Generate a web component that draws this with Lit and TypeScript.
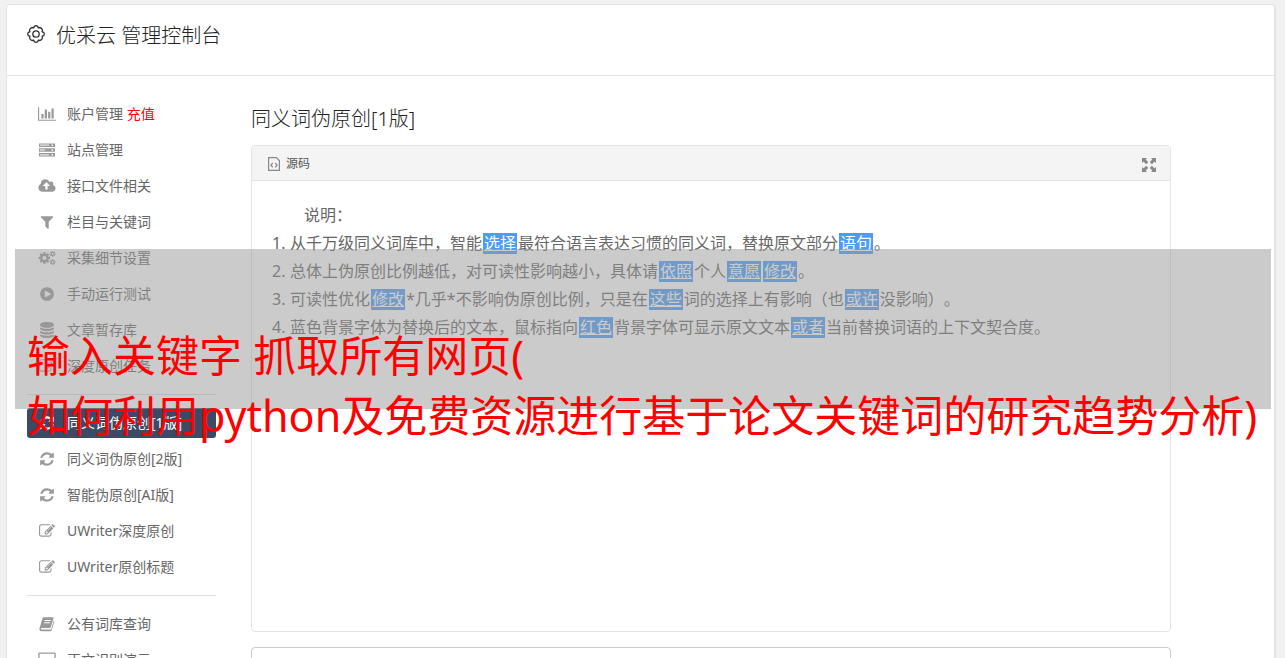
import { LitElement, html, css, svg, nothing } from "lit";
import { customElement } from "lit/decorators.js";
import { classMap } from "lit/directives/class-map.js";

const cog = (cx: number, cy: number, r: number, hole: number) => svg`
  <circle cx=${cx} cy=${cy} r=${(r + hole) / 2} fill="none" stroke="currentColor" stroke-width=${r - hole}></circle>
  ${[0, 45, 90, 135].map(
    (a) => svg`<rect x=${cx - r * 0.28} y=${cy - r * 1.35} width=${r * 0.56} height=${r * 0.5} transform="rotate(${a} ${cx} ${cy})"></rect>
    <rect x=${cx - r * 0.28} y=${cy + r * 0.85} width=${r * 0.56} height=${r * 0.5} transform="rotate(${a} ${cx} ${cy})"></rect>`
  )}`;

const ICONS: Record<string, { box: string; w: number; h: number; body: unknown }> = {
  chart: {
    box: "0 0 2048 1792", w: 18, h: 16,
    body: svg`<path d="M640 896v512h-256v-512h256zm384-512v1024h-256v-1024h256zm1024 1152v128h-2048v-1536h128v1408h1920zm-640-896v768h-256v-768h256zm384-384v1152h-256v-1152h256z"/>`,
  },
  server: {
    box: "0 0 18 16", w: 18, h: 16,
    body: svg`<path fill-rule="evenodd" d="M1 1.5h16v3.6H1zM2 2.6v1.4h9V2.6zM13.6 2.6v1.4h1.4V2.6zM1 6.2h16v3.6H1zM2 7.3v1.4h5V7.3zM13.6 7.3v1.4h1.4V7.3zM1 10.9h16v3.6H1zM2 12v1.4h9V12zM13.6 12v1.4h1.4V12z"/><path opacity=".45" d="M2 2.6h9v1.4H2zM2 7.3h5v1.4H2zM2 12h9v1.4H2z"/>`,
  },
  upload: {
    box: "0 0 1920 1792", w: 18, h: 16,
    body: svg`<path fill-rule="evenodd" d="M1280 864q0-14-9-23l-352-352q-9-9-23-9t-23 9l-351 351q-10 12-10 24 0 14 9 23t23 9h224v352q0 13 9.500 22.500t22.500 9.500h192q13 0 22.500-9.500t9.500-22.500v-352h224q13 0 22.500-9.500t9.500-22.500zm640 288q0 159-112.500 271.500t-271.500 112.500h-1088q-185 0-316.500-131.500t-131.500-316.500q0-130 70-240t188-165q-2-30-2-43 0-212 150-362t362-150q156 0 285.500 87t188.500 231q71-62 166-62 106 0 181 75t75 181q0 76-41 138 130 31 213.500 135.500t83.500 238.500z"/>`,
  },
  filter: {
    box: "0 0 1792 1792", w: 16, h: 16,
    body: svg`<path d="M1595 295q17 41-14 70l-493 493v742q0 42-39 59-13 5-25 5-27 0-45-19l-256-256q-19-19-19-45v-486l-493-493q-31-29-14-70 17-39 59-39h1280q42 0 59 39z"/>`,
  },
  cogs: {
    box: "0 0 18 16", w: 18, h: 16,
    body: svg`${cog(6.4, 8, 4.3, 2)}${cog(14.6, 3.9, 2.1, 1)}${cog(14.6, 12.2, 2.1, 1)}`,
  },
  play: {
    box: "0 0 1792 1792", w: 16, h: 16,
    body: svg`<path fill-rule="evenodd" d="M896 128q209 0 385.500 103t279.500 279.500 103 385.500-103 385.500-279.500 279.500-385.500 103-385.500-103-279.500-279.500-103-385.500 103-385.500 279.500-279.500 385.500-103zm384 823q32-18 32-55t-32-55l-544-320q-31-19-64-1-32 19-32 56v640q0 37 32 56 16 8 32 8 17 0 32-9z"/>`,
  },
  database: {
    box: "0 0 1792 1792", w: 16, h: 16,
    body: svg`<path d="M896 768q237 0 443-43t325-127v170q0 69-103 128t-280 93.500-385 34.500-385-34.500-280-93.500-103-128v-170q119 84 325 127t443 43zm0 768q237 0 443-43t325-127v170q0 69-103 128t-280 93.500-385 34.500-385-34.500-280-93.500-103-128v-170q119 84 325 127t443 43zm0-384q237 0 443-43t325-127v170q0 69-103 128t-280 93.500-385 34.500-385-34.500-280-93.500-103-128v-170q119 84 325 127t443 43zm0-1152q208 0 385 34.500t280 93.500 103 128v128q0 69-103 128t-280 93.500-385 34.500-385-34.500-280-93.500-103-128v-128q0-69 103-128t280-93.500 385-34.500z"/>`,
  },
  edit: {
    box: "0 0 1792 1792", w: 16, h: 16,
    body: svg`<path d="M888 1184l116-116-152-152-116 116v56h96v96h56zm440-720q-16-16-33 1l-350 350q-17 17-1 33t33-1l350-350q17-17 1-33zm80 594v190q0 119-84.500 203.500t-203.500 84.500h-832q-119 0-203.500-84.500t-84.500-203.500v-832q0-119 84.500-203.500t203.500-84.500h832q63 0 117 25 15 7 18 23 3 17-9 29l-49 49q-14 14-32 8-23-6-45-6h-832q-66 0-113 47t-47 113v832q0 66 47 113t113 47h832q66 0 113-47t47-113v-126q0-13 9-22l64-64q15-15 35-7t20 29zm-96-738l288 288-672 672h-288v-288zm444 132l-92 92-288-288 92-92q28-28 68-28t68 28l152 152q28 28 28 68t-28 68z"/>`,
  },
  refresh: {
    box: "0 0 1792 1792", w: 16, h: 16,
    body: svg`<path d="M1639 1056q0 5-1 7-64 268-268 434.500t-478 166.500q-146 0-282.500-55t-243.500-157l-129 129q-19 19-45 19t-45-19-19-45v-448q0-26 19-45t45-19h448q26 0 45 19t19 45-19 45l-137 137q71 66 161 102t187 36q134 0 250-65t186-179q11-17 53-117 8-23 30-23h192q13 0 22.500 9.500t9.500 22.500zm25-800v448q0 26-19 45t-45 19h-448q-26 0-45-19t-19-45 19-45l138-138q-148-137-349-137-134 0-250 65t-186 179q-11 17-53 117-8 23-30 23h-199q-13 0-22.500-9.500t-9.500-22.500v-7q65-268 270-434.500t480-166.500q146 0 284 55.500t245 156.500l130-129q19-19 45-19t45 19 19 45z"/>`,
  },
  book: {
    box: "0 0 16 16", w: 16, h: 16,
    body: svg`<path fill-rule="evenodd" d="M5.200 1.200h8.600q1 0 .7 1.100l-2.700 8.700q-.3 1-1.300 1H2.800q-1 0-1 .8t1 .8h8.400q.8 0 1-.7l2.500-8.200q.8.300.5 1.300l-2.500 8q-.4 1.300-1.700 1.300H2.700Q.9 15.300.5 13.700q-.3-.9.1-1.800L3.400 2.600q.4-1.400 1.800-1.400zM5.800 4l-.3 1h6.200l.3-1zM5.100 6.200l-.3 1H11l.3-1z"/>`,
  },
  desktop: {
    box: "0 0 18 16", w: 18, h: 16,
    body: svg`<path fill-rule="evenodd" d="M1.500.5h15q1.200 0 1.200 1.200v10q0 1.200-1.200 1.200H11l.8 2.600H6.200L7 12.900H1.500q-1.200 0-1.200-1.200v-10Q.3.500 1.500.5zM1.600 1.800v8.400h14.800V1.800z"/>`,
  },
  gear: {
    box: "0 0 18 18", w: 18, h: 18,
    body: svg`<g fill="none" stroke="currentColor" stroke-width="1.300"><circle cx="9" cy="9" r="3.200"/><path stroke-linejoin="round" d="M7.300 1.300Q9 .200 10.700 1.300L11.200 2.900L12.900 2.500Q14.900 2.900 15.500 5.100L15.100 6.800L16.700 7.300Q17.800 9 16.700 10.700L15.100 11.200L15.500 12.900Q15.100 14.900 12.900 15.500L11.200 15.100L10.700 16.700Q9 17.800 7.300 16.700L6.800 15.100L5.100 15.500Q3.100 15.100 2.500 12.900L2.900 11.200L1.300 10.700Q.200 9 1.300 7.300L2.900 6.800L2.500 5.100Q2.900 3.100 5.100 2.500L6.800 2.900Z"/></g>`,
  },
  code: {
    box: "0 0 12 14", w: 12, h: 14,
    body: svg`<g fill="none" stroke="currentColor" stroke-width="1.200"><path d="M.6.600h7.600l3.200 3v9.800H.6z"/><path d="M4.800 6 2.900 8.200l1.900 2.200M7.200 6l1.900 2.200-1.900 2.200"/></g>`,
  },
  expand: {
    box: "0 0 14 14", w: 14, h: 14,
    body: svg`<path d="M0 0h5L3.600 1.500 6.200 4.100 4.100 6.200 1.500 3.600 0 5zM14 0v5l-1.500-1.400-2.600 2.600-2.100-2.100 2.600-2.600L9 0zM0 14V9l1.500 1.400 2.600-2.600 2.100 2.100-2.600 2.600L5 14zM14 14H9l1.400-1.500-2.600-2.600 2.100-2.100 2.600 2.600L14 9z"/>`,
  },
};

const icon = (name: string) => {
  const i = ICONS[name];
  return html`<svg class="glyph" viewBox=${i.box} width=${i.w} height=${i.h} fill="currentColor" aria-hidden="true">${i.body}</svg>`;
};

type Item = { icon: string; text: string; extra?: string; active?: boolean };

const GROUPS: Item[][] = [
  [
    { icon: "chart", text: "账户管理", extra: "充值" },
    { icon: "server", text: "站点管理" },
    { icon: "upload", text: "接口文件相关" },
    { icon: "filter", text: "栏目与关键词" },
    { icon: "cogs", text: "采集细节设置" },
    { icon: "play", text: "手动运行测试" },
    { icon: "database", text: "文章暂存库" },
    { icon: "edit", text: "深度原创任务" },
  ],
  [
    { icon: "refresh", text: "同义词伪原创[1版]", active: true },
    { icon: "refresh", text: "同义词伪原创[2版]" },
    { icon: "refresh", text: "智能伪原创[AI版]" },
    { icon: "edit", text: "UWriter深度原创" },
    { icon: "edit", text: "UWriter原创标题" },
  ],
  [
    { icon: "book", text: "公有词库查询" },
    { icon: "desktop", text: "正文识别演示" },
  ],
];

/* Words between braces are the replaced synonyms. */
const NOTES = [
  "从千万级同义词库中，智能{选择}最符合语言表达习惯的同义词，替换原文部分{语句}。",
  "总体上伪原创比例越低，对可读性影响越小，具体请{依照}个人{意愿}{修改}。",
  "可读性优化{修改}*几乎*不影响伪原创比例，只是在{这些}词的选择上有影响（也{或许}没影响）。",
  "蓝色背景字体为替换后的文本，鼠标指向{红色}背景字体可显示原文文本{或者}当前替换词语的上下文契合度。",
];

const note = (text: string) =>
  text
    .split(/[{}]/)
    .map((part, i) => (i % 2 ? html`<a class="word" href="#">${part}</a>` : part));

@customElement("app-root")
export class AppRoot extends LitElement {
  static styles = css`
    :host {
      display: block;
      position: relative;
      box-sizing: border-box;
      height: 100vh;
      overflow: hidden;
      padding: 4px 9px 0 6px;
      background: #f1f1f1;
      color: #555;
      font: 14px/20px "Noto Sans", "Noto Sans CJK SC", sans-serif;
      text-spacing-trim: space-all;
    }
    * { box-sizing: border-box; }
    .card {
      min-height: 100vh;
      background: #fff;
      border: 1px solid #e4e4e4;
      border-right-width: 2px;
      border-radius: 4px 4px 0 0;
    }
    .top {
      display: flex;
      align-items: flex-start;
      gap: 11px;
      height: 71px;
      padding: 17px 20px;
      border-bottom: 1px solid #e4e4e4;
      color: #333;
    }
    .top .glyph { margin-top: 3px; }
    h1, h2 {
      margin: 0;
      font-size: 20px;
      line-height: 28px;
      font-weight: 300;
      color: #222;
    }
    .columns { display: flex; gap: 35px; padding: 23px 103px 0 20px; }
    nav { flex: 0 0 189px; }
    ul { display: grid; gap: 6px; margin: 0; padding: 0; list-style: none; }
    hr { margin: 13px 0; border: 0; border-top: 1px solid #ddd; }
    .item {
      display: flex;
      align-items: center;
      gap: 10px;
      height: 30px;
      padding-left: 10px;
      border-radius: 3px;
      color: #666;
      text-decoration: none;
    }
    .slot { display: flex; justify-content: center; width: 20px; color: #999; }
    .extra { color: #f00; }
    .active { background: #3b4b66; color: #fff; }
    .active .slot { color: #fff; }
    .glyph { display: block; flex: none; }
    main { flex: 1; min-width: 0; padding-top: 6px; }
    .panel {
      min-height: 487px;
      margin: 12px 0 15px;
      border: 1px solid #e4e4e4;
      border-radius: 4px;
    }
    .bar {
      display: flex;
      align-items: center;
      justify-content: space-between;
      height: 35px;
      padding: 2px 14px 0 16px;
      background: #f4f4f4;
      border-bottom: 1px solid #e4e4e4;
      border-radius: 3px 3px 0 0;
      font-size: 12px;
    }
    .caption { display: flex; align-items: center; gap: 6px; }
    .caption .glyph, .expand { color: #888; }
    .expand { padding: 1px 0 0; border: 0; background: none; }
    .notes { padding: 20px; font-size: 16px; line-height: 28px; color: #666; }
    .notes p { margin: 0; padding-left: 32px; }
    ol { margin: 0; padding: 0; list-style: none; counter-reset: n; }
    li.note { display: flex; counter-increment: n; }
    li.note::before { content: counter(n) "."; flex: 0 0 18px; }
    .word {
      display: inline-block;
      height: 21px;
      margin: 0 1px;
      padding: 0 1px;
      line-height: 21px;
      background: #4a9cf4;
      color: #fff;
      text-decoration: underline;
    }
    textarea {
      display: block;
      width: 100%;
      height: 160px;
      border: 1px solid #ccc;
      border-radius: 4px;
      resize: none;
    }
    .banner {
      position: absolute;
      top: 249px;
      left: 15px;
      right: 14px;
      height: 160px;
      padding: 77px 0 0 12px;
      background: rgba(151, 151, 151, 0.5);
      color: #f00;
      font-size: 43px;
      line-height: 60px;
      white-space: nowrap;
      pointer-events: none;
    }
  `;

  private item(i: Item) {
    return html`<li>
      <a class=${classMap({ item: true, active: !!i.active })} href="#">
        <span class="slot">${icon(i.icon)}</span>
        <span>${i.text}${i.extra ? html` <span class="extra">${i.extra}</span>` : nothing}</span>
      </a>
    </li>`;
  }

  render() {
    return html`
      <div class="card">
        <header class="top">${icon("gear")}<h1>优采云 管理控制台</h1></header>
        <div class="columns">
          <nav>
            ${GROUPS.map((g, n) => html`${n ? html`<hr />` : nothing}<ul>${g.map((i) => this.item(i))}</ul>`)}
          </nav>
          <main>
            <h2>同义词伪原创[1版]</h2>
            <section class="panel">
              <div class="bar">
                <span class="caption">${icon("code")}源码</span>
                <button class="expand" aria-label="全屏">${icon("expand")}</button>
              </div>
              <div class="notes">
                <p>说明：</p>
                <ol>${NOTES.map((t) => html`<li class="note"><span>${note(t)}</span></li>`)}</ol>
              </div>
            </section>
            <textarea aria-label="源码"></textarea>
          </main>
        </div>
      </div>
      <div class="banner">输入关键字 抓取所有网页(<br />如何利用python及免费资源进行基于论文关键词的研究趋势分析)</div>
    `;
  }
}
